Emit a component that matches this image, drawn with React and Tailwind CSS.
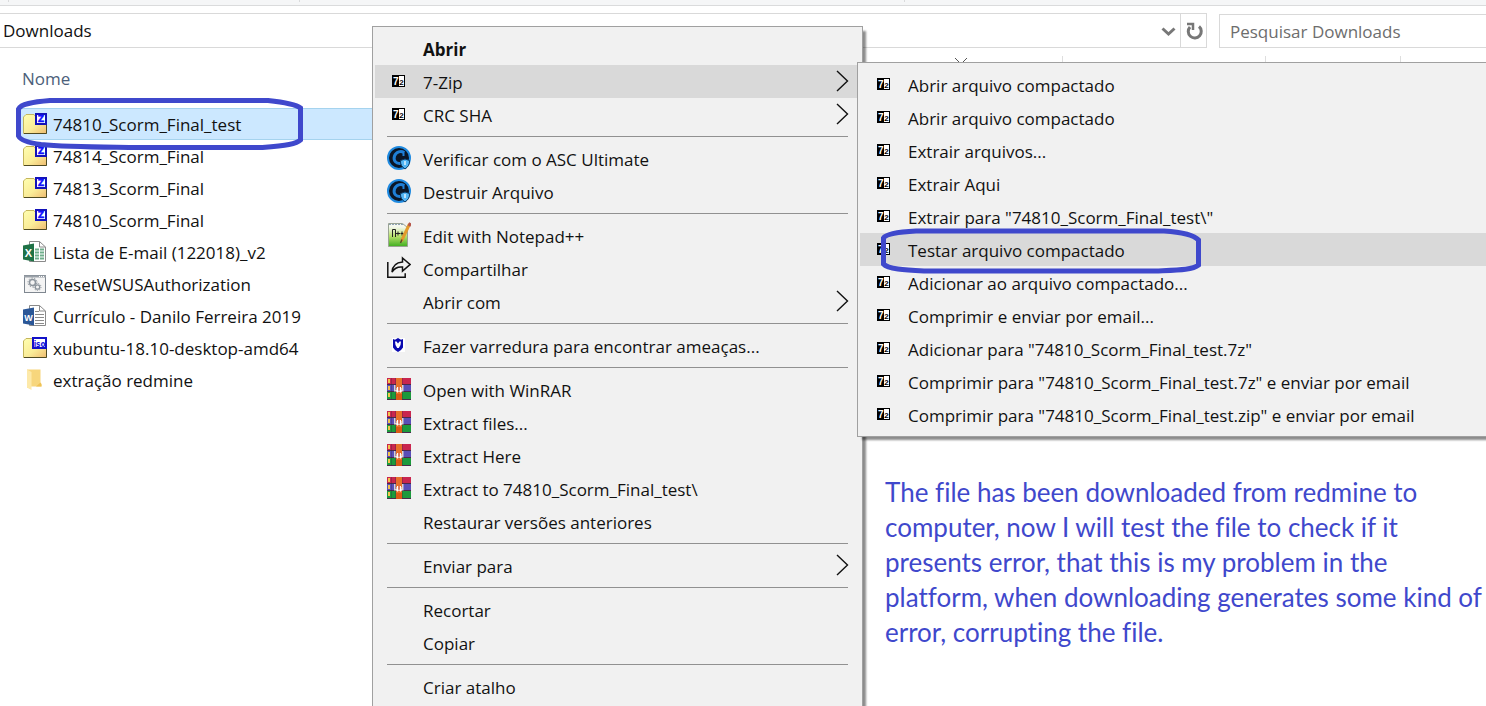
import React from 'react'

const files = [
  { name: '74810_Scorm_Final_test', icon: 'zip', selected: true },
  { name: '74814_Scorm_Final', icon: 'zip' },
  { name: '74813_Scorm_Final', icon: 'zip' },
  { name: '74810_Scorm_Final', icon: 'zip' },
  { name: 'Lista de E-mail (122018)_v2', icon: 'excel' },
  { name: 'ResetWSUSAuthorization', icon: 'batch' },
  { name: 'Currículo - Danilo Ferreira 2019', icon: 'word' },
  { name: 'xubuntu-18.10-desktop-amd64', icon: 'iso' },
  { name: 'extração redmine', icon: 'folder' },
]

const menuGroups = [
  [
    { label: 'Abrir', bold: true },
    { label: '7-Zip', icon: 'sevenZip', arrow: true, active: true },
    { label: 'CRC SHA', icon: 'sevenZip', arrow: true },
  ],
  [
    { label: 'Verificar com o ASC Ultimate', icon: 'asc' },
    { label: 'Destruir Arquivo', icon: 'asc' },
  ],
  [
    { label: 'Edit with Notepad++', icon: 'notepad' },
    { label: 'Compartilhar', icon: 'share' },
    { label: 'Abrir com', arrow: true },
  ],
  [{ label: 'Fazer varredura para encontrar ameaças...', icon: 'shield' }],
  [
    { label: 'Open with WinRAR', icon: 'winrar' },
    { label: 'Extract files...', icon: 'winrar' },
    { label: 'Extract Here', icon: 'winrar' },
    { label: 'Extract to 74810_Scorm_Final_test\\', icon: 'winrar' },
    { label: 'Restaurar versões anteriores' },
  ],
  [{ label: 'Enviar para', arrow: true }],
  [{ label: 'Recortar' }, { label: 'Copiar' }],
  [{ label: 'Criar atalho' }],
]

const subItems = [
  'Abrir arquivo compactado',
  'Abrir arquivo compactado',
  'Extrair arquivos...',
  'Extrair Aqui',
  'Extrair para "74810_Scorm_Final_test\\"',
  'Testar arquivo compactado',
  'Adicionar ao arquivo compactado...',
  'Comprimir e enviar por email...',
  'Adicionar para "74810_Scorm_Final_test.7z"',
  'Comprimir para "74810_Scorm_Final_test.7z" e enviar por email',
  'Comprimir para "74810_Scorm_Final_test.zip" e enviar por email',
]

const note = [
  'The file has been downloaded from redmine to',
  'computer, now I will test the file to check if it',
  'presents error, that this is my problem in the',
  'platform, when downloading generates some kind of',
  'error, corrupting the file.',
]

const ArchiveIcon = ({ label }) => (
  <svg width="24" height="24" viewBox="0 0 24 24">
    <defs>
      <linearGradient id="archive" x1="0" y1="0" x2="1" y2="1">
        <stop offset="0" stopColor="#ffffb0" />
        <stop offset="0.55" stopColor="#faec98" />
        <stop offset="1" stopColor="#eebb70" />
      </linearGradient>
    </defs>
    <path
      d="M.5 21.5V5L3 2.500h8L13 5h10.500v16.500z"
      fill="url(#archive)"
      stroke="#c4b55c"
    />
    <path d="M1 21.500h22.500V6" fill="none" stroke="#4f4a22" />
    {label === 'iso' ? (
      <>
        <rect x="10" y="2" width="13" height="10" fill="#fff" stroke="#1212c8" strokeWidth="2" />
        <text x="16.500" y="10.500" textAnchor="middle" fontSize="8" fontWeight="700" fontFamily="DejaVu Sans Condensed, DejaVu Sans, sans-serif" fill="#1212e0">
          iso
        </text>
      </>
    ) : (
      <>
        <rect x="13" y="2" width="10" height="10" fill="#fff" stroke="#1212b8" strokeWidth="2" />
        <text x="18" y="10" textAnchor="middle" fontSize="9" fontWeight="700" fontFamily="DejaVu Sans, sans-serif" fill="#1212ff" stroke="#1212ff" strokeWidth=".4">
          Z
        </text>
      </>
    )}
  </svg>
)

const OfficeIcon = ({ letter, color }) => (
  <svg width="24" height="24" viewBox="0 0 24 24">
    <path d="M6.500 1.500h10L22.500 7v14.500h-16z" fill="#fff" stroke="#8a8a8a" />
    <path d="M16.500 1.500V7h6" fill="none" stroke="#8a8a8a" />
    {letter === 'X' ? (
      <path
        d="M12 9.500h4M17 9.500h4M12 12.500h4M17 12.500h4M12 15.500h4M17 15.500h4M12 18.500h4M17 18.500h4"
        stroke="#6fae8b"
        strokeWidth="2"
      />
    ) : (
      <path d="M12 7.500h4M12 10.500h9M12 13.500h9M12 16.500h9M12 19.500h9" stroke="#8a8a8a" />
    )}
    <path d="M0 5.500 11 3.500v18L0 19.500z" fill={color} />
    <text x="5.500" y="16.500" textAnchor="middle" fontSize={letter === 'X' ? 11 : 9} fontWeight="700" fontFamily="Liberation Sans, sans-serif" fill="#fff">
      {letter}
    </text>
  </svg>
)

const BatchIcon = () => (
  <svg width="24" height="24" viewBox="0 0 24 24">
    <rect x="1.500" y="3.500" width="21" height="17" fill="#f4f4f4" stroke="#7f8790" />
    <path d="M1 4.500h22" stroke="#9aa1a8" strokeWidth="2" />
    <path d="M16 4.500h1M18 4.500h1M20 4.500h1" stroke="#fff" />
    <circle cx="9.500" cy="10.500" r="3" fill="none" stroke="#8c949c" strokeWidth="1.500" />
    <circle cx="9.500" cy="10.500" r="4.500" fill="none" stroke="#8c949c" strokeDasharray="1.400 1.400" />
    <circle cx="14.500" cy="15" r="2.200" fill="#f4f4f4" stroke="#8c949c" strokeWidth="1.300" />
    <circle cx="14.500" cy="15" r="3.500" fill="none" stroke="#8c949c" strokeDasharray="1.200 1.200" />
  </svg>
)

const FolderIcon = () => (
  <svg width="24" height="24" viewBox="0 0 24 24">
    <path d="M4 1.500h13.500V15l1 2v1.500H8V21l-4-1.500z" fill="#f7d67c" />
    <path d="M4 1.500 8.500 4v18L4 19.500z" fill="#fde9a9" />
    <path d="M13 18.500h5.500V16l-1-1.500z" fill="#efc255" />
  </svg>
)

const SevenZipIcon = () => (
  <svg width="14" height="12" viewBox="0 0 14 12">
    <rect width="13" height="12" fill="#000" />
    <rect x="7" y="1" width="5" height="10" fill="#fff" />
    <text x="3.800" y="9.500" textAnchor="middle" fontSize="10" fontWeight="700" fontFamily="Liberation Sans, sans-serif" fill="#fff">
      7
    </text>
    <text x="9.500" y="10" textAnchor="middle" fontSize="8" fontWeight="700" fontFamily="Liberation Sans, sans-serif" fill="#000">
      2
    </text>
  </svg>
)

const AscIcon = () => (
  <svg width="24" height="24" viewBox="0 0 24 24">
    <circle cx="12" cy="12" r="11" fill="#0b1626" stroke="#1f8ae0" strokeWidth="2" />
    <path
      d="M17 6.500C14 4.500 9 5.500 7.500 10c-1.500 4.500 1.500 8 6 7.500"
      fill="none"
      stroke="#1f7fd6"
      strokeWidth="3"
    />
    <path d="M16.500 5v5" stroke="#1f7fd6" strokeWidth="2" />
    <path d="M13.500 14.500 18 13l4.500 1.500c.3 4-1.500 6.500-4.500 8.500-3-2-4.800-4.500-4.500-8.500z" fill="#52b5f4" stroke="#0b3a66" />
    <path d="M18 15v4" stroke="#dff2ff" strokeWidth="1.500" />
  </svg>
)

const NotepadIcon = () => (
  <svg width="24" height="26" viewBox="0 0 24 26">
    <defs>
      <linearGradient id="notepad" x1="0" y1="0" x2="0" y2="1">
        <stop offset="0.150" stopColor="#f4f8ee" />
        <stop offset="0.550" stopColor="#b7e06a" />
        <stop offset="1" stopColor="#3fae20" />
      </linearGradient>
    </defs>
    <path d="M1.500 1.500h14l5 4v19h-19z" fill="url(#notepad)" stroke="#9aa394" />
    <path d="M2 2.500h14" stroke="#8fa3b5" strokeDasharray="2 1" />
    <path d="M5.500 15V7.500h3V15M9 11.500h4M11 9.500v4M13.500 11.500h3M15 9.500v4" fill="none" stroke="#222" />
    <path d="M22.500 2 14.500 19" stroke="#e39a2c" strokeWidth="3" />
    <path d="M23.500 1 22 4" stroke="#b5554a" strokeWidth="3" />
    <path d="M15 17.500 13.500 21" stroke="#5c4a2a" strokeWidth="1.500" />
  </svg>
)

const ShareIcon = () => (
  <svg width="24" height="24" viewBox="0 0 24 24" fill="none" stroke="#111" strokeWidth="1.500">
    <path d="M.8 6v15.200h17.400v-4" />
    <path d="M15.500 2 23 8.500l-7.500 6.500v-4C11 10.500 7.500 12 5 16c.5-6 4.500-9.500 10.500-10z" />
  </svg>
)

const ShieldIcon = () => (
  <svg width="14" height="14" viewBox="0 0 14 14">
    <path d="M0 0h13v14H0z" fill="#fff" />
    <path d="M1 1l2 .8L6 0l3 1.800L11 1v8.500L9 12l-3 2-3-2-2-2.500z" fill="#0a0ab0" />
    <path d="M3 3.500h1.500L6 5.500l1.500-2H9L8.500 7 6.800 10H5.200L3.500 7z" fill="#fff" />
  </svg>
)

const WinrarIcon = () => (
  <svg width="24" height="24" viewBox="0 0 24 24">
    <path d="M0 1h24v6.500H0z" fill="#c9264f" />
    <path d="M0 8h24v6.500H0z" fill="#5a4fb8" />
    <path d="M0 15h24v7.500H0z" fill="#1c9a3c" />
    <path d="M0 7h24v1H0zM0 14h24v1H0zM0 22h24v1H0z" fill="#4a2a4c" />
    <path d="M1 2h2v4H1zM1 9h2v4H1zM1 16h2v4H1z" fill="#f3c44a" />
    <path d="M4 1h1v21H4z" fill="#33203a" opacity=".3" />
    <path d="M8 1h1v21H8zM15 1h1v21h-1z" fill="#33203a" opacity=".3" />
    <path d="M9 1h6v22H9z" fill="#e8702a" />
    <path d="M9 17h6v6H9z" fill="#d95a16" />
    <path d="M7 8h1.500v5H15V8h1.500v6.500H7z" fill="#d8d2d6" />
    <path d="M10 15v-4l1-1v5zM13 15v-5l1 1v4z" fill="#fff" stroke="#fff" />
    <path d="M11.500 10h1v4h-1z" fill="#d0402a" />
  </svg>
)

const icons = {
  zip: <ArchiveIcon />,
  iso: <ArchiveIcon label="iso" />,
  excel: <OfficeIcon letter="X" color="#1f7246" />,
  word: <OfficeIcon letter="W" color="#2b5797" />,
  batch: <BatchIcon />,
  folder: <FolderIcon />,
  sevenZip: <SevenZipIcon />,
  asc: <AscIcon />,
  notepad: <NotepadIcon />,
  share: <ShareIcon />,
  shield: <ShieldIcon />,
  winrar: <WinrarIcon />,
}

const MenuItem = ({ label, icon, arrow, bold, active }) => (
  <button
    type="button"
    role="menuitem"
    className={`flex h-[33px] w-full items-center gap-3 whitespace-nowrap pl-3 pr-[11px] pt-[2px] text-left ${
      active ? 'bg-[#d9d9d9]' : ''
    } ${bold ? 'font-bold' : ''}`}
  >
    <span className="flex w-6 shrink-0 justify-center pb-[3px]">
      {icon && icons[icon]}
    </span>
    <span className="flex-1">{label}</span>
    {arrow && (
      <svg width="13" height="22" viewBox="0 0 13 22" className="mb-1">
        <path d="M1 1l10.500 10L1 21" fill="none" stroke="#111" strokeWidth="1.400" />
      </svg>
    )}
  </button>
)

const ContextMenu = () => (
  <div
    role="menu"
    className="absolute left-[372px] top-[26px] w-[491px] border border-[#a0a0a0] bg-[#f1f1f1] px-[2px] py-[5px] shadow-[3px_5px_2px_rgba(0,0,0,0.45)]"
  >
    {menuGroups.map((group, index) => (
      <div key={index} role="group">
        {index > 0 && <hr className="mx-3 my-[5px] border-[#919191]" />}
        {group.map((item) => (
          <MenuItem key={item.label} {...item} />
        ))}
      </div>
    ))}
  </div>
)

const SubMenu = () => (
  <div
    role="menu"
    className="absolute left-[857px] right-[-4px] top-[62px] border border-[#a0a0a0] bg-[#f1f1f1] px-[2px] py-[5px] shadow-[5px_3px_2px_rgba(0,0,0,0.45)]"
  >
    {subItems.map((label, index) => (
      <MenuItem key={index} label={label} icon="sevenZip" active={index === 5} />
    ))}
  </div>
)

const AddressBar = () => (
  <div className="flex gap-3 pt-[7px]">
    <div className="flex h-[35px] flex-1 items-center border border-l-0 border-[#d9d9d9] pl-[3px]">
      <span className="flex-1">Downloads</span>
      <button type="button" aria-label="Locais anteriores" className="px-1">
        <svg width="16" height="16" viewBox="0 0 16 16">
          <path d="M2.500 5.500l6 5.500 6-5.500" fill="none" stroke="#777" strokeWidth="3" />
        </svg>
      </button>
      <button
        type="button"
        aria-label="Atualizar"
        className="flex h-full w-[26px] items-center justify-center border-l border-[#d9d9d9]"
      >
        <svg width="18" height="18" viewBox="0 0 18 18">
          <path d="M5 5a6.500 6.500 0 1 0 9-.5" fill="none" stroke="#777" strokeWidth="3" />
          <path d="M2 2h6v6" fill="none" stroke="#777" strokeWidth="2.500" />
        </svg>
      </button>
    </div>
    <input
      type="text"
      aria-label="Pesquisar Downloads"
      placeholder="Pesquisar Downloads"
      className="mt-px h-[34px] w-[267px] border border-r-0 border-[#d9d9d9] px-[10px] outline-none placeholder:text-[#6d6d6d]"
    />
  </div>
)

const FileList = () => (
  <table className="mt-2 w-full table-fixed border-collapse">
    <thead>
      <tr className="h-[52px] text-left text-[#4c607a]">
        <th className="relative pb-[7px] pl-[22px] font-normal">
          Nome
          <svg width="14" height="7" viewBox="0 0 14 7" className="absolute right-[94px] top-[2px]">
            <path d="M1 0l6 6 6-6" fill="none" stroke="#555" />
          </svg>
        </th>
        <th aria-label="Data" className="w-[203px] border-l border-[#dedede]" />
        <th aria-label="Tipo" className="w-[135px] border-l border-[#dedede]" />
        <th aria-label="Tamanho" className="w-[86px] border-l border-[#dedede]" />
      </tr>
    </thead>
    <tbody>
      {files.map(({ name, icon, selected }) => (
        <tr key={name} className="h-8">
          <td colSpan={4} className="p-0 pl-5">
            <div
              className={`flex h-8 items-center gap-[6px] pl-[3px] pt-[2px] ${
                selected ? 'border-y border-[#a5d3ee] bg-[#cce8ff]' : ''
              }`}
            >
              <span className="w-6 pb-[3px]">{icons[icon]}</span>
              {name}
            </div>
          </td>
        </tr>
      ))}
    </tbody>
  </table>
)

const Annotations = () => (
  <>
    <svg
      width="288"
      height="54"
      viewBox="0 0 288 54"
      className="pointer-events-none absolute left-4 top-[98px]"
    >
      <path
        d="M34 2.500H252c14 1.500 28 4 32.500 7.500V42c-4 4-14 5.500-38 7.500H116C80 49 50 49 25 46.500 14 45 5 43 2.500 38V11C5 6 16 4 34 2.500z"
        fill="none"
        stroke="#3f48cc"
        strokeWidth="5"
      />
    </svg>
    <svg
      width="322"
      height="46"
      viewBox="0 0 322 46"
      className="pointer-events-none absolute left-[880px] top-[228px]"
    >
      <path
        d="M36 3H284c16 1 30 4 34.500 9V37c-6 5-20 5-43 6H44C24 42 8 41 3.500 36V10C6 6 16 4 36 3z"
        fill="none"
        stroke="#3f48cc"
        strokeWidth="5"
      />
    </svg>
    <p className="absolute left-[885px] top-[475px] whitespace-nowrap font-['Lato',sans-serif] text-[26px] leading-[35px] text-[#3f48cc] [font-variant-ligatures:none]">
      {note.map((line) => (
        <span key={line} className="block">
          {line}
        </span>
      ))}
    </p>
  </>
)

const App = () => {
  return (
    <main className="relative h-screen overflow-hidden bg-white font-['Open_Sans','Noto_Sans',sans-serif] text-[17px] text-[#111]">
      <div className="flex h-[6px] border-b border-[#dadbdc] bg-[#f5f6f7]">
        <span className="ml-2 h-[2px] w-[292px] border-x border-[#dadbdc]" />
        <span className="h-[2px] w-[605px] border-r border-[#dadbdc]" />
      </div>
      <AddressBar />
      <FileList />
      <ContextMenu />
      <SubMenu />
      <Annotations />
    </main>
  )
}

export default App
